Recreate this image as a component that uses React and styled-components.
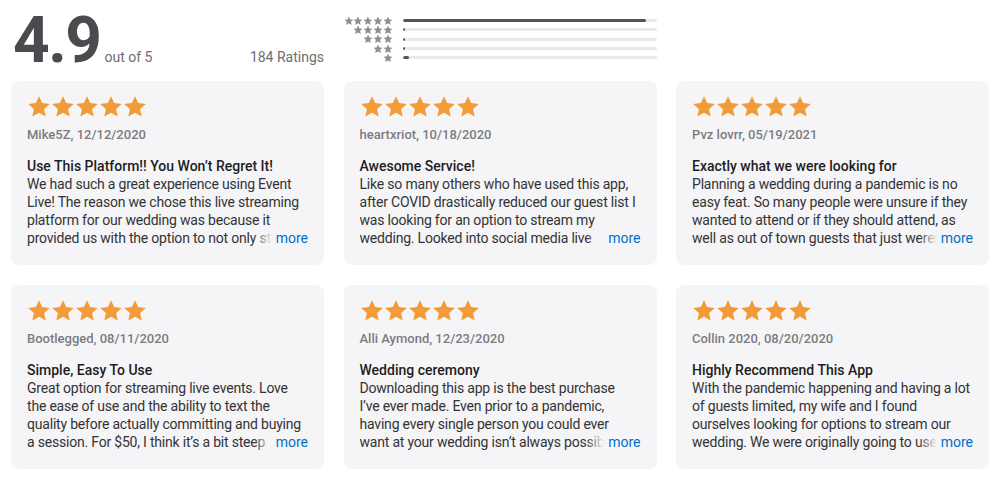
import React from 'react';
import styled, { createGlobalStyle } from 'styled-components';

const GlobalStyle = createGlobalStyle`
  body {
    margin: 0;
    background: #ffffff;
    font-family: Roboto, "Liberation Sans", sans-serif;
    -webkit-font-smoothing: antialiased;
  }
`;

const reviews = [
  {
    author: 'Mike5Z, 12/12/2020',
    title: 'Use This Platform!! You Won’t Regret It!',
    lines: [
      'We had such a great experience using Event',
      'Live! The reason we chose this live streaming',
      'platform for our wedding was because it',
      'provided us with the option to not only stream',
    ],
  },
  {
    author: 'heartxriot, 10/18/2020',
    title: 'Awesome Service!',
    lines: [
      'Like so many others who have used this app,',
      'after COVID drastically reduced our guest list I',
      'was looking for an option to stream my',
      'wedding. Looked into social media live',
    ],
  },
  {
    author: 'Pvz lovrr, 05/19/2021',
    title: 'Exactly what we were looking for',
    lines: [
      'Planning a wedding during a pandemic is no',
      'easy feat. So many people were unsure if they',
      'wanted to attend or if they should attend, as',
      'well as out of town guests that just weren’t',
    ],
  },
  {
    author: 'Bootlegged, 08/11/2020',
    title: 'Simple, Easy To Use',
    lines: [
      'Great option for streaming live events. Love',
      'the ease of use and the ability to text the',
      'quality before actually committing and buying',
      'a session. For $50, I think it’s a bit steep',
    ],
  },
  {
    author: 'Alli Aymond, 12/23/2020',
    title: 'Wedding ceremony',
    lines: [
      'Downloading this app is the best purchase',
      'I’ve ever made. Even prior to a pandemic,',
      'having every single person you could ever',
      'want at your wedding isn’t always possible',
    ],
  },
  {
    author: 'Collin 2020, 08/20/2020',
    title: 'Highly Recommend This App',
    lines: [
      'With the pandemic happening and having a lot',
      'of guests limited, my wife and I found',
      'ourselves looking for options to stream our',
      'wedding. We were originally going to use',
    ],
  },
];

// share of ratings per star count, 5 -> 1
const histogram = [0.96, 0.01, 0.01, 0.01, 0.025];

function Star({ size, color }) {
  return (
    <svg width={size} height={size} viewBox="0 0 24 24">
      <polygon
        fill={color}
        points="12,1.2 15.2,8.1 22.8,8.9 17.1,14 18.7,21.5 12,17.7 5.3,21.5 6.9,14 1.2,8.9 8.8,8.1"
      />
    </svg>
  );
}

function Review({ review }) {
  return (
    <Card>
      <Stars>
        {[0, 1, 2, 3, 4].map(i => (
          <Star key={i} size={24} color="#f29b38" />
        ))}
      </Stars>
      <Author>{review.author}</Author>
      <Title>{review.title}</Title>
      <Body>
        {review.lines.map((line, i) => (
          <Line key={i}>{line}</Line>
        ))}
        <More>more</More>
      </Body>
    </Card>
  );
}

export default function App() {
  return (
    <Page>
      <GlobalStyle />
      <Header>
        <Summary>
          <Score>4.9</Score>
          <OutOf>out of 5</OutOf>
          <Count>184 Ratings</Count>
        </Summary>
        <Histogram>
          {histogram.map((share, i) => (
            <HistRow key={i}>
              <HistStars>
                {Array.from({ length: 5 - i }).map((_, j) => (
                  <Star key={j} size={10} color="#8e8e93" />
                ))}
              </HistStars>
              <Track>
                <Fill style={{ width: `${share * 100}%` }} />
              </Track>
            </HistRow>
          ))}
        </Histogram>
      </Header>
      <Grid>
        {reviews.map((r, i) => (
          <Review key={i} review={r} />
        ))}
      </Grid>
    </Page>
  );
}

const Page = styled.div`
  width: 978px;
  padding: 0 11px;
`;

const Header = styled.div`
  display: grid;
  grid-template-columns: repeat(3, minmax(0, 1fr));
  column-gap: 19.5px;
  height: 81px;
`;

const Summary = styled.div`
  display: flex;
  align-items: baseline;
  padding-top: 9px;
  height: 64px;
`;

const Score = styled.span`
  font-size: 64px;
  font-weight: 700;
  letter-spacing: -1.5px;
  line-height: 64px;
  color: #4a4a4f;
  margin-left: 2px;
`;

const OutOf = styled.span`
  font-size: 14px;
  color: #6e6e73;
  margin-left: 4px;
`;

const Count = styled.span`
  font-size: 14px;
  color: #6e6e73;
  margin-left: auto;
`;

const Histogram = styled.div`
  display: flex;
  flex-direction: column;
  padding-top: 16px;
`;

const HistRow = styled.div`
  display: flex;
  align-items: center;
  height: 9.3px;
`;

const HistStars = styled.div`
  display: flex;
  justify-content: flex-end;
  width: 49px;
  margin-right: 10px;
  & svg {
    display: block;
  }
`;

const Track = styled.div`
  flex: 1;
  height: 3px;
  border-radius: 2px;
  background: #e8e8ed;
  overflow: hidden;
`;

const Fill = styled.div`
  height: 100%;
  min-width: 2px;
  background: #555558;
  border-radius: 2px;
`;

const Grid = styled.div`
  display: grid;
  grid-template-columns: repeat(3, minmax(0, 1fr));
  column-gap: 19.5px;
  row-gap: 20px;
`;

const Card = styled.div`
  background: #f5f5f7;
  border-radius: 8px;
  padding: 14px 16px 0;
  height: 184px;
  box-sizing: border-box;
  min-width: 0;
`;

const Stars = styled.div`
  display: flex;
  height: 24px;
  & svg {
    display: block;
  }
`;

const Author = styled.div`
  margin-top: 7px;
  font-size: 13px;
  font-weight: 500;
  line-height: 18px;
  color: #7c7c80;
`;

const Title = styled.div`
  margin-top: 13px;
  font-size: 14px;
  font-weight: 500;
  line-height: 18px;
  color: #1d1d1f;
`;

const Body = styled.div`
  position: relative;
  font-size: 14px;
  line-height: 18px;
  letter-spacing: -0.2px;
  color: #333336;
`;

const Line = styled.div`
  white-space: nowrap;
  overflow: hidden;
`;

const More = styled.span`
  position: absolute;
  right: 0;
  bottom: 0;
  padding-left: 22px;
  letter-spacing: 0;
  color: #0070c9;
  background: linear-gradient(to right, rgba(245, 245, 247, 0), #f5f5f7 18px);
`;
